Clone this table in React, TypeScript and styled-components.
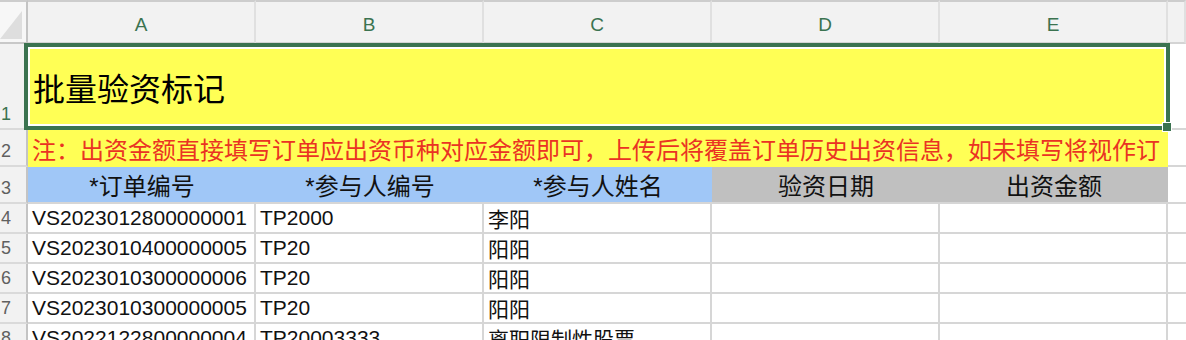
import React from "react";
import styled, { createGlobalStyle } from "styled-components";

const GREEN = "#3b7350";
const GRID = "#d6d6d6";
const HEAD_BG = "#f2f2f2";

const GlobalStyle = createGlobalStyle`
  * { box-sizing: border-box; }
  html, body {
    margin: 0;
    padding: 0;
    overflow: hidden;
    background: #fff;
  }
  body {
    font-family: "Liberation Sans", "Noto Sans CJK SC", sans-serif;
  }
`;

const Sheet = styled.div`
  display: grid;
  grid-template-columns: 28px repeat(5, 228px) 1fr;
  grid-template-rows: 44px 86px 37px 37px repeat(5, 30px);
  width: 1186px;
`;

const Corner = styled.div`
  background: #f7f7f7;
  border-top: 2px solid #cdcdcd;
  border-right: 2px solid #c4c4c4;
  border-bottom: 2px solid #c8c8c8;
  svg {
    display: block;
  }
`;

const ColHead = styled.div<{ $active?: boolean }>`
  background: ${HEAD_BG};
  border-top: 2px solid #cdcdcd;
  border-right: 2px solid #e0e0e0;
  border-bottom: 2px solid #d4d4d4;
  display: flex;
  align-items: center;
  justify-content: center;
  padding-top: 5px;
  font-size: 19px;
  color: ${(p) => (p.$active ? GREEN : "#666")};
`;

const RowHead = styled.div<{ $active?: boolean }>`
  background: ${HEAD_BG};
  border-right: 2px solid #c4c4c4;
  border-bottom: 2px solid #dadada;
  display: flex;
  align-items: flex-end;
  justify-content: flex-end;
  padding: 0 15px 5px 0;
  white-space: nowrap;
  font-size: 18px;
  line-height: 1;
  color: ${(p) => (p.$active ? GREEN : "#606060")};
`;

const TitleCell = styled.div`
  grid-column: span 5;
  position: relative;
  background: #ffff55;
  display: flex;
  align-items: center;
  padding-left: 5px;
  font-size: 32px;
  color: #000;
`;

const Selection = styled.div`
  position: absolute;
  top: -1px;
  left: -4px;
  right: -2px;
  bottom: 0;
  border: 4px solid ${GREEN};
  box-shadow: inset 0 0 0 2px #fff;
  pointer-events: none;
`;

const FillHandle = styled.div`
  position: absolute;
  right: -6px;
  bottom: -6px;
  width: 10px;
  height: 10px;
  background: ${GREEN};
  border: 1px solid #fff;
`;

const NoteCell = styled.div`
  grid-column: span 5;
  background: #ffff55;
  display: flex;
  align-items: center;
  padding-left: 4px;
  overflow: hidden;
  white-space: nowrap;
  font-size: 24px;
  color: #ea3323;
`;

const HeaderCell = styled.div<{ $fill: string }>`
  background: ${(p) => p.$fill};
  border-bottom: 2px solid ${GRID};
  display: flex;
  align-items: center;
  justify-content: center;
  font-size: 24px;
  color: #111;
  white-space: nowrap;
`;

const Cell = styled.div<{ $last?: boolean }>`
  border-right: ${(p) => (p.$last ? "none" : `2px solid ${GRID}`)};
  border-bottom: 2px solid ${GRID};
  display: flex;
  align-items: center;
  padding-left: 4px;
  overflow: hidden;
  white-space: nowrap;
  font-size: 21px;
  color: #111;
`;

const columns = ["A", "B", "C", "D", "E"];

const headers = [
  { label: "*订单编号", fill: "#a0c7f7" },
  { label: "*参与人编号", fill: "#a0c7f7" },
  { label: "*参与人姓名", fill: "#a0c7f7" },
  { label: "验资日期", fill: "#c0c0c0" },
  { label: "出资金额", fill: "#c0c0c0" },
];

const rows = [
  ["VS2023012800000001", "TP2000", "李阳"],
  ["VS2023010400000005", "TP20", "阳阳"],
  ["VS2023010300000006", "TP20", "阳阳"],
  ["VS2023010300000005", "TP20", "阳阳"],
  ["VS2022122800000004", "TP20003333", "离职限制性股票"],
];

export default function App() {
  return (
    <>
      <GlobalStyle />
      <Sheet>
        <Corner>
          <svg width="26" height="40" viewBox="0 0 26 40">
            <polygon points="0,37 22,9 22,37" fill="#dedede" />
          </svg>
        </Corner>
        {columns.map((c) => (
          <ColHead key={c} $active>
            {c}
          </ColHead>
        ))}
        <ColHead />

        <RowHead $active>1</RowHead>
        <TitleCell>
          批量验资标记
          <Selection>
            <FillHandle />
          </Selection>
        </TitleCell>
        <Cell $last />

        <RowHead>2</RowHead>
        <NoteCell>
          注：出资金额直接填写订单应出资币种对应金额即可，上传后将覆盖订单历史出资信息，如未填写将视作订
        </NoteCell>
        <Cell $last />

        <RowHead>3</RowHead>
        {headers.map((h) => (
          <HeaderCell key={h.label} $fill={h.fill}>
            {h.label}
          </HeaderCell>
        ))}
        <Cell $last />

        {rows.map((r, i) => (
          <React.Fragment key={i}>
            <RowHead>{i + 4}</RowHead>
            <Cell>{r[0]}</Cell>
            <Cell>{r[1]}</Cell>
            <Cell>{r[2]}</Cell>
            <Cell />
            <Cell />
            <Cell $last />
          </React.Fragment>
        ))}
      </Sheet>
    </>
  );
}
